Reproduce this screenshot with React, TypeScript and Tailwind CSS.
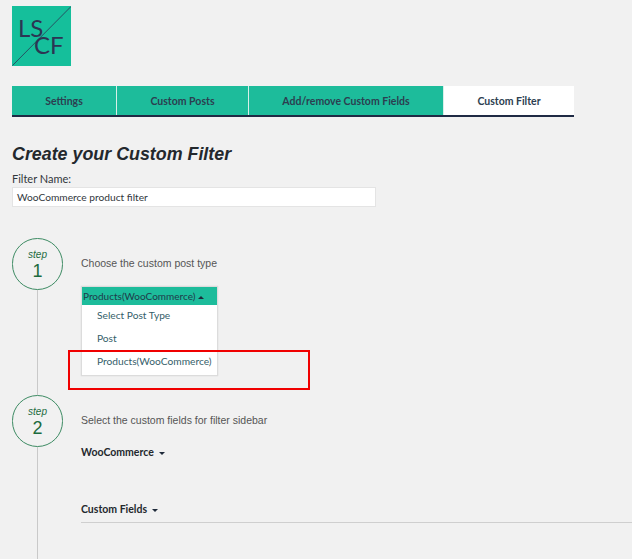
import React from "react";

const tabs = [
  { label: "Settings", width: "w-[105px]" },
  { label: "Custom Posts", width: "w-[132px]" },
  { label: "Add/remove Custom Fields", width: "w-[195px]" },
];

const StepCircle = ({ num }: { num: number }) => (
  <div className="w-[51px] h-[52px] shrink-0 rounded-full border border-[#3d8b63] flex flex-col items-center text-[#1c6b3e] font-['Liberation_Sans',sans-serif]">
    <span className="text-[10px] italic leading-[12px] mt-[10px]">step</span>
    <span className="text-[18px] leading-[18px] mt-[1px]">{num}</span>
  </div>
);

const Caret = ({ up, gap }: { up?: boolean; gap: string }) => (
  <svg width="6" height="3" viewBox="0 0 6 3" className={`inline-block align-middle ${gap}`}>
    <path d={up ? "M0 3 L3 0 L6 3 Z" : "M0 0 L6 0 L3 3 Z"} fill="#1f2a3a" />
  </svg>
);

export default function App() {
  return (
    <div className="relative h-[559px] overflow-hidden bg-[#f1f1f1] pl-3 flex flex-col font-['Lato',sans-serif]">
      <div className="mt-[6px] w-[59px] h-[60px] shrink-0">
        <svg viewBox="0 0 59 60" width="59" height="60">
          <rect width="59" height="60" fill="#15bf9b" />
          <line x1="0.5" y1="59.5" x2="59" y2="0.5" stroke="#2c3553" strokeWidth="0.8" />
          <text x="6" y="31" fontSize="24" fill="#2c3553" fontFamily="Lato, sans-serif">LS</text>
          <text x="22" y="48" fontSize="24" fill="#2c3553" fontFamily="Lato, sans-serif">CF</text>
        </svg>
      </div>

      <div className="mt-[20px] flex w-[562px] h-[31px] shrink-0 border-b-[2px] border-[#1f2a44] text-[10.5px] font-bold text-[#2c3e50]">
        {tabs.map((t) => (
          <div key={t.label} className={`${t.width} pt-[3px] bg-[#1dbc9b] border-r border-[#d8efe9] flex items-center justify-center`}>
            {t.label}
          </div>
        ))}
        <div className="flex-1 pt-[3px] bg-white flex items-center justify-center">Custom Filter</div>
      </div>

      <h1 className="mt-[26px] text-[17.85px] leading-[22px] font-bold italic text-[#23282d] font-['Liberation_Sans',sans-serif]">
        Create your Custom Filter
      </h1>

      <label className="mt-[7px] text-[11px] leading-[14px] text-[#32373c]">Filter Name:</label>
      <div className="mt-[1px] w-[364px] h-[20px] shrink-0 bg-white border border-[#e4e4e4] pl-[4px] text-[10.2px] leading-[18px] text-[#32373c]">
        WooCommerce product filter
      </div>

      <div className="mt-[31px] flex h-[157px] shrink-0">
        <div className="w-[51px] flex flex-col items-center shrink-0">
          <StepCircle num={1} />
          <div className="w-px flex-1 bg-[#c9c9c9]" />
        </div>
        <div className="ml-[18px]">
          <p className="mt-[19px] text-[10.5px] leading-[13px] text-[#555] font-['Liberation_Sans',sans-serif]">
            Choose the custom post type
          </p>
          <div className="mt-[16px] w-[137px] border border-[#dcdcdc] bg-white shadow-[0_0_1px_#ccc]">
            <div className="h-[18px] bg-[#1dbc9b] pl-[1px] text-[10px] leading-[18px] text-[#1f3a4a] whitespace-nowrap">
              Products(WooCommerce)
              <Caret up gap="ml-[3px]" />
            </div>
            <div className="h-[70px] flex flex-col text-[10.2px] text-[#35606a] pl-[15px]">
              <span className="h-[23px] leading-[20px]">Select Post Type</span>
              <span className="h-[23px] leading-[20px]">Post</span>
              <span className="h-[23px] leading-[20px] whitespace-nowrap">Products(WooCommerce)</span>
            </div>
          </div>
        </div>
      </div>

      <div className="flex flex-1">
        <div className="w-[51px] flex flex-col items-center shrink-0">
          <StepCircle num={2} />
          <div className="w-px flex-1 bg-[#c9c9c9]" />
        </div>
        <div className="ml-[18px] flex-1 flex flex-col">
          <p className="mt-[19px] text-[10.5px] leading-[13px] text-[#555] font-['Liberation_Sans',sans-serif]">
            Select the custom fields for filter sidebar
          </p>
          <div className="mt-[18px] text-[10.5px] leading-[14px] font-bold text-[#23282d]">
            WooCommerce
            <Caret gap="ml-[5px]" />
          </div>
          <div className="mt-[43px] pb-[6px] border-b border-[#cfcfcf] text-[10.5px] leading-[14px] font-bold text-[#23282d]">
            Custom Fields
            <Caret gap="ml-[5px]" />
          </div>
        </div>
      </div>

      <div className="absolute left-[68px] top-[350px] w-[242px] h-[40px] border-[2px] border-[#f00000]" />
    </div>
  );
}
